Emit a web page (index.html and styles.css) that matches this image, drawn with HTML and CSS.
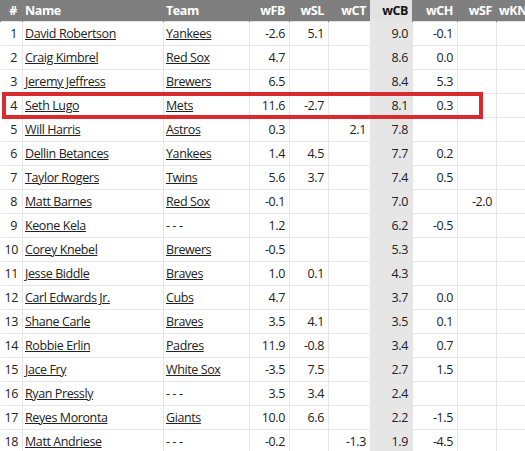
FILE: index.html
```html
<!DOCTYPE html>
<html>
<head>
<meta charset="utf-8">
<link rel="stylesheet" href="styles.css">
</head>
<body>
<div class="wrap">
<table class="grid">
<colgroup>
<col class="c-num"><col class="c-name"><col class="c-team"><col class="c-fb"><col class="c-sl"><col class="c-ct"><col class="c-cb"><col class="c-ch"><col class="c-sf"><col class="c-kn">
</colgroup>
<thead>
<tr><th class="r">#</th><th class="l">Name</th><th class="l">Team</th><th>wFB</th><th>wSL</th><th>wCT</th><th class="sorted">wCB</th><th>wCH</th><th>wSF</th><th class="l">wKN</th></tr>
</thead>
<tbody>
<tr><td>1</td><td class="l"><a>David Robertson</a></td><td class="l"><a>Yankees</a></td><td>-2.6</td><td>5.1</td><td></td><td class="sorted">9.0</td><td>-0.1</td><td></td><td></td></tr>
<tr><td>2</td><td class="l"><a>Craig Kimbrel</a></td><td class="l"><a>Red Sox</a></td><td>4.7</td><td></td><td></td><td class="sorted">8.6</td><td>0.0</td><td></td><td></td></tr>
<tr><td>3</td><td class="l"><a>Jeremy Jeffress</a></td><td class="l"><a>Brewers</a></td><td>6.5</td><td></td><td></td><td class="sorted">8.4</td><td>5.3</td><td></td><td></td></tr>
<tr><td>4</td><td class="l"><a>Seth Lugo</a></td><td class="l"><a>Mets</a></td><td>11.6</td><td>-2.7</td><td></td><td class="sorted">8.1</td><td>0.3</td><td></td><td></td></tr>
<tr><td>5</td><td class="l"><a>Will Harris</a></td><td class="l"><a>Astros</a></td><td>0.3</td><td></td><td>2.1</td><td class="sorted">7.8</td><td></td><td></td><td></td></tr>
<tr><td>6</td><td class="l"><a>Dellin Betances</a></td><td class="l"><a>Yankees</a></td><td>1.4</td><td>4.5</td><td></td><td class="sorted">7.7</td><td>0.2</td><td></td><td></td></tr>
<tr><td>7</td><td class="l"><a>Taylor Rogers</a></td><td class="l"><a>Twins</a></td><td>5.6</td><td>3.7</td><td></td><td class="sorted">7.4</td><td>0.5</td><td></td><td></td></tr>
<tr><td>8</td><td class="l"><a>Matt Barnes</a></td><td class="l"><a>Red Sox</a></td><td>-0.1</td><td></td><td></td><td class="sorted">7.0</td><td></td><td>-2.0</td><td></td></tr>
<tr><td>9</td><td class="l"><a>Keone Kela</a></td><td class="l">- - -</td><td>1.2</td><td></td><td></td><td class="sorted">6.2</td><td>-0.5</td><td></td><td></td></tr>
<tr><td>10</td><td class="l"><a>Corey Knebel</a></td><td class="l"><a>Brewers</a></td><td>-0.5</td><td></td><td></td><td class="sorted">5.3</td><td></td><td></td><td></td></tr>
<tr><td>11</td><td class="l"><a>Jesse Biddle</a></td><td class="l"><a>Braves</a></td><td>1.0</td><td>0.1</td><td></td><td class="sorted">4.3</td><td></td><td></td><td></td></tr>
<tr><td>12</td><td class="l"><a>Carl Edwards Jr.</a></td><td class="l"><a>Cubs</a></td><td>4.7</td><td></td><td></td><td class="sorted">3.7</td><td>0.0</td><td></td><td></td></tr>
<tr><td>13</td><td class="l"><a>Shane Carle</a></td><td class="l"><a>Braves</a></td><td>3.5</td><td>4.1</td><td></td><td class="sorted">3.5</td><td>0.1</td><td></td><td></td></tr>
<tr><td>14</td><td class="l"><a>Robbie Erlin</a></td><td class="l"><a>Padres</a></td><td>11.9</td><td>-0.8</td><td></td><td class="sorted">3.4</td><td>0.7</td><td></td><td></td></tr>
<tr><td>15</td><td class="l"><a>Jace Fry</a></td><td class="l"><a>White Sox</a></td><td>-3.5</td><td>7.5</td><td></td><td class="sorted">2.7</td><td>1.5</td><td></td><td></td></tr>
<tr><td>16</td><td class="l"><a>Ryan Pressly</a></td><td class="l">- - -</td><td>3.5</td><td>3.4</td><td></td><td class="sorted">2.4</td><td></td><td></td><td></td></tr>
<tr><td>17</td><td class="l"><a>Reyes Moronta</a></td><td class="l"><a>Giants</a></td><td>10.0</td><td>6.6</td><td></td><td class="sorted">2.2</td><td>-1.5</td><td></td><td></td></tr>
<tr><td>18</td><td class="l"><a>Matt Andriese</a></td><td class="l">- - -</td><td>-0.2</td><td></td><td>-1.3</td><td class="sorted">1.9</td><td>-4.5</td><td></td><td></td></tr>
</tbody>
</table>
<div class="highlight"></div>
</div>
</body>
</html>
```

FILE: styles.css
```css
html, body {
  margin: 0;
  padding: 0;
  background: #fff;
  overflow: hidden;
}
.wrap {
  position: relative;
  width: 540px;
}
.grid {
  border-collapse: collapse;
  table-layout: fixed;
  width: 540px;
  font-family: "Open Sans", "Noto Sans", sans-serif;
  font-size: 12.5px;
  letter-spacing: -0.4px;
  color: #222;
}
.c-num { width: 22px; }
.c-name { width: 141px; }
.c-team { width: 86px; }
.c-fb { width: 40px; }
.c-sl { width: 39px; }
.c-ct { width: 42px; }
.c-cb { width: 42px; }
.c-ch { width: 45px; }
.c-sf { width: 39px; }
.c-kn { width: 44px; }
.grid th {
  background: #7f7f7f;
  color: #fff;
  font-weight: bold;
  height: 21px;
  padding: 0 4px;
  text-align: right;
  white-space: nowrap;
  overflow: hidden;
  border: 0;
  border-left: 1px solid #7f7f7f;
}
.grid th.l { text-align: left; padding-left: 2px; }
.grid th.r { padding-right: 5px; }
.grid th.sorted {
  background: #e3e3e3;
  color: #111;
  border-left-color: #e3e3e3;
}
.grid td {
  height: 23px;
  padding: 0 4px;
  text-align: right;
  border: 1px solid #e6e6e6;
  white-space: nowrap;
  overflow: hidden;
}
.grid td:first-child { padding-right: 5px; border-left: 0; }
.grid td.l { text-align: left; padding-left: 2px; }
.grid td.sorted {
  background: #e6e6e6;
  border-color: #e6e6e6;
}
.grid a {
  color: #222;
  text-decoration: underline;
}
.highlight {
  position: absolute;
  left: 2px;
  top: 92px;
  width: 473px;
  height: 19px;
  border: 4px solid #d92a2f;
  pointer-events: none;
}
```
